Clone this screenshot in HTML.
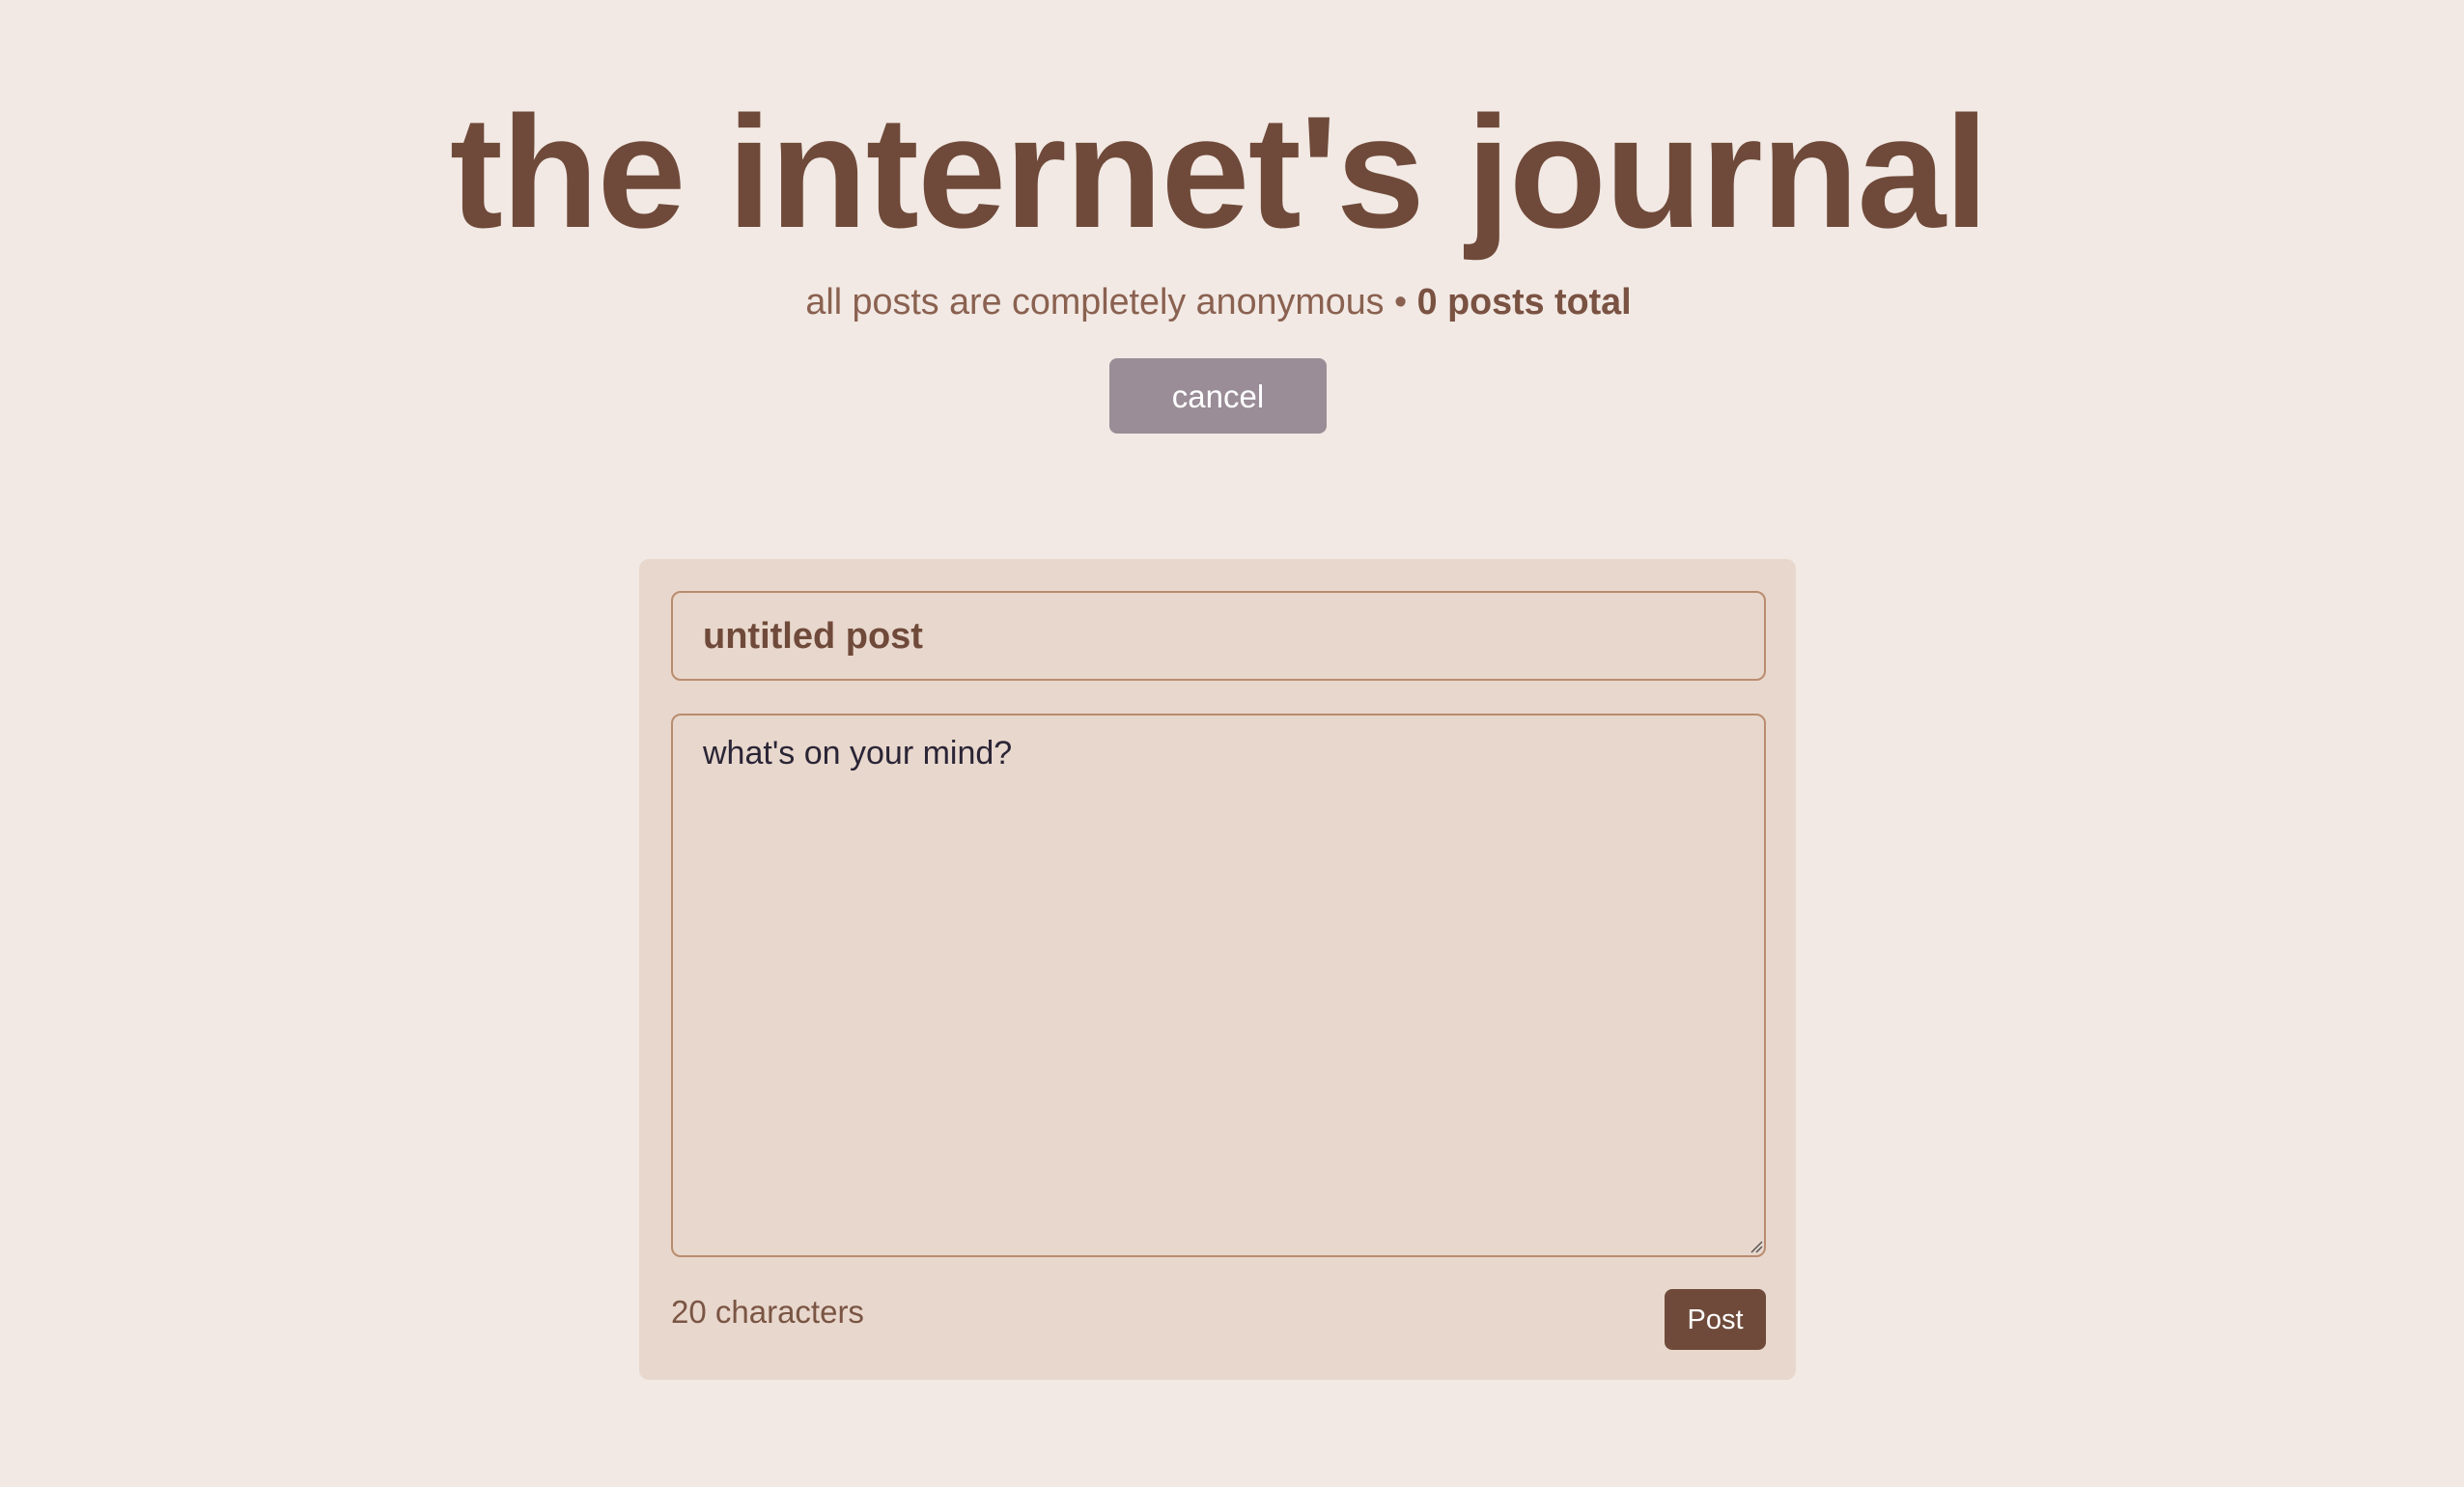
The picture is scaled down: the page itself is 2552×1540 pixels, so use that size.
<!DOCTYPE html>
<html><head><meta charset="utf-8"><style>
html,body{margin:0;padding:0;background:#f2e9e4;width:2552px;height:1540px;overflow:hidden;font-family:"Liberation Sans",sans-serif}
.abs{position:absolute}
h1{position:absolute;left:0;width:2524px;top:78px;margin:0;text-align:center;font-size:165px;font-weight:bold;letter-spacing:-1.5px;color:#6f4a3a;line-height:200px}
.sub{left:0;width:2524px;top:287px;text-align:center;font-size:37.7px;color:#8a6150;line-height:50px}
.sub b{color:#7a5242}
.cancel{left:1149px;top:371px;width:225px;height:78px;background:#9a8d97;border-radius:8px;color:#fff;font-size:33px;text-align:center;line-height:80px}
.card{left:662px;top:579px;width:1198px;height:850px;background:#e8d7cc;border-radius:10px}
.in{left:695px;top:612px;width:1130px;height:89px;border:2px solid #b98c6f;border-radius:10px}
.ta{left:695px;top:739px;width:1130px;height:559px;border:2px solid #b98c6f;border-radius:10px}
.t1{left:728px;top:637px;font-size:38px;font-weight:bold;color:#6f4a3a;line-height:44px}
.t2{left:728px;top:758px;font-size:34px;color:#2a2536;line-height:44px}
.cc{left:695px;top:1337px;font-size:33px;color:#7a5544;line-height:44px}
.post{left:1724px;top:1335px;width:105px;height:63px;background:#6f4a3a;border-radius:8px;color:#fff;font-size:29px;text-align:center;line-height:65px}
</style></head><body>
<h1>the internet's journal</h1>
<div class="abs sub">all posts are completely anonymous • <b>0 posts total</b></div>
<div class="abs cancel">cancel</div>
<div class="abs card"></div>
<div class="abs in"></div>
<div class="abs ta"></div>
<div class="abs t1">untitled post</div>
<div class="abs t2">what's on your mind?</div>
<svg class="abs" style="left:1812px;top:1284px" width="14" height="14"><path d="M2 13L13 2M7 13L13 7" stroke="#555" stroke-width="1.5"/></svg>
<div class="abs cc">20 characters</div>
<div class="abs post">Post</div>
</body></html>
